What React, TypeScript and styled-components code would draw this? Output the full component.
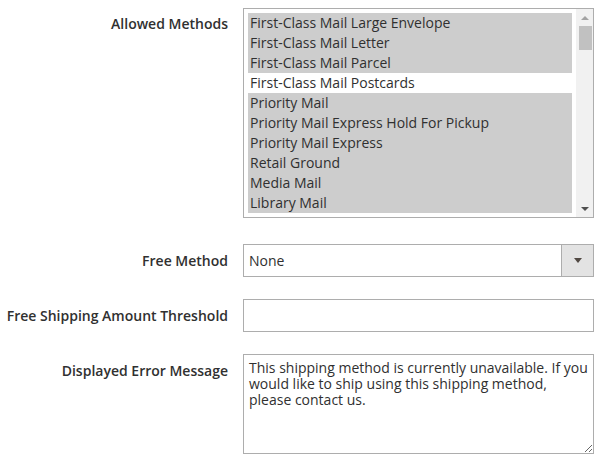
import React from 'react'
import styled, { createGlobalStyle } from 'styled-components'

const GlobalStyle = createGlobalStyle`
  html, body {
    margin: 0;
    padding: 0;
    background: #ffffff;
  }
  body {
    font-family: 'Open Sans', 'Liberation Sans', sans-serif;
    font-size: 14px;
    color: #303030;
  }
`

const methods = [
  { name: 'First-Class Mail Large Envelope', selected: true },
  { name: 'First-Class Mail Letter', selected: true },
  { name: 'First-Class Mail Parcel', selected: true },
  { name: 'First-Class Mail Postcards', selected: false },
  { name: 'Priority Mail', selected: true },
  { name: 'Priority Mail Express Hold For Pickup', selected: true },
  { name: 'Priority Mail Express', selected: true },
  { name: 'Retail Ground', selected: true },
  { name: 'Media Mail', selected: true },
  { name: 'Library Mail', selected: true },
]

const Form = styled.form`
  padding-top: 8px;
  width: 604px;
`

const Row = styled.div<{ $space?: number }>`
  display: grid;
  grid-template-columns: 228px 351px;
  column-gap: 15px;
  align-items: start;
  margin-bottom: ${(p) => p.$space ?? 22}px;
`

const Label = styled.label<{ $top?: number }>`
  font-weight: 600;
  font-size: 14px;
  line-height: 19px;
  text-align: right;
  white-space: nowrap;
  padding-top: ${(p) => p.$top ?? 7}px;
  color: #303030;
`

const ListBox = styled.div`
  display: flex;
  height: 210px;
  box-sizing: border-box;
  border: 1px solid #adadad;
  background: #ffffff;
`

const Options = styled.ul`
  flex: 1;
  list-style: none;
  margin: 0;
  padding: 4px;
  overflow: hidden;
`

const Option = styled.li<{ $selected: boolean }>`
  height: 20px;
  line-height: 20px;
  padding-left: 2px;
  white-space: nowrap;
  background: ${(p) => (p.$selected ? '#cdcdcd' : '#ffffff')};
  color: #303030;
`

const ScrollBar = styled.div`
  width: 17px;
  display: flex;
  flex-direction: column;
  background: #f1f1f1;
`

const ScrollButton = styled.div<{ $dir: 'up' | 'down'; $active?: boolean }>`
  height: 17px;
  display: flex;
  align-items: center;
  justify-content: center;

  &::before {
    content: '';
    width: 0;
    height: 0;
    border-left: 4px solid transparent;
    border-right: 4px solid transparent;
    ${(p) =>
      p.$dir === 'up'
        ? `border-bottom: 4px solid ${p.$active ? '#505050' : '#a3a3a3'};`
        : `border-top: 4px solid ${p.$active ? '#505050' : '#a3a3a3'};`}
  }
`

const Track = styled.div`
  flex: 1;
`

const Thumb = styled.div`
  height: 24px;
  margin: 0 1px 0 3px;
  background: #c1c1c1;
`

const SelectBox = styled.div`
  display: flex;
  height: 33px;
  box-sizing: border-box;
  border: 1px solid #adadad;
  background: #ffffff;
`

const SelectValue = styled.span`
  flex: 1;
  padding-left: 5px;
  line-height: 31px;
  font-size: 14px;
  color: #303030;
`

const SelectButton = styled.span`
  width: 32px;
  box-sizing: border-box;
  border-left: 1px solid #adadad;
  background: #e3e3e3;
  display: flex;
  align-items: center;
  justify-content: center;

  &::before {
    content: '';
    width: 0;
    height: 0;
    border-left: 4px solid transparent;
    border-right: 4px solid transparent;
    border-top: 5px solid #514943;
  }
`

const TextInput = styled.input`
  display: block;
  width: 351px;
  height: 33px;
  box-sizing: border-box;
  border: 1px solid #adadad;
  border-radius: 0;
  margin: 0;
  padding: 0 5px;
  font-family: 'Open Sans', 'Liberation Sans', sans-serif;
  font-size: 14px;
  color: #303030;
  outline: none;
`

const TextArea = styled.textarea`
  display: block;
  width: 351px;
  height: 100px;
  box-sizing: border-box;
  border: 1px solid #adadad;
  border-radius: 0;
  margin: 0;
  padding: 5px 5px;
  font-family: 'Open Sans', 'Liberation Sans', sans-serif;
  font-size: 14px;
  line-height: 16px;
  color: #303030;
  resize: vertical;
  outline: none;
`

export default function App() {
  return (
    <>
      <GlobalStyle />
      <Form>
        <Row $space={26}>
          <Label $top={6}>Allowed Methods</Label>
          <ListBox>
            <Options>
              {methods.map((m) => (
                <Option key={m.name} $selected={m.selected}>
                  {m.name}
                </Option>
              ))}
            </Options>
            <ScrollBar>
              <ScrollButton $dir="up" />
              <Thumb />
              <Track />
              <ScrollButton $dir="down" $active />
            </ScrollBar>
          </ListBox>
        </Row>

        <Row>
          <Label>Free Method</Label>
          <SelectBox>
            <SelectValue>None</SelectValue>
            <SelectButton />
          </SelectBox>
        </Row>

        <Row>
          <Label>Free Shipping Amount Threshold</Label>
          <TextInput type="text" defaultValue="" />
        </Row>

        <Row>
          <Label>Displayed Error Message</Label>
          <TextArea defaultValue="This shipping method is currently unavailable. If you would like to ship using this shipping method, please contact us." />
        </Row>
      </Form>
    </>
  )
}
